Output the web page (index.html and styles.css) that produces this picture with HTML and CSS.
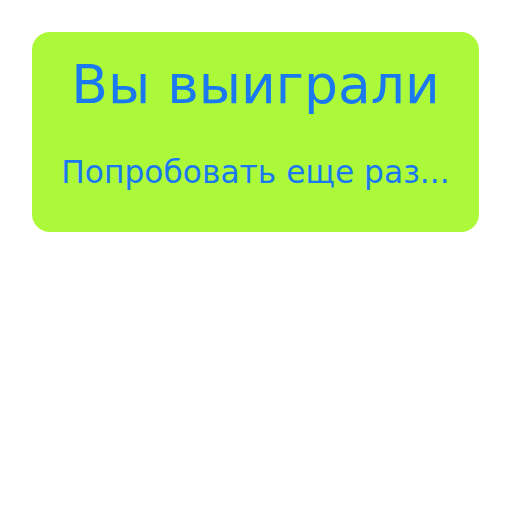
FILE: index.html
```html
<!DOCTYPE html>
<html lang="ru">
<head>
<meta charset="utf-8">
<link rel="stylesheet" href="styles.css">
</head>
<body>
<div class="card">
  <h1 class="title">Вы выиграли</h1>
  <p class="retry">Попробовать еще раз...</p>
</div>
</body>
</html>
```

FILE: styles.css
```css
html, body {
  margin: 0;
  padding: 0;
  background: #ffffff;
}
body {
  padding: 32px 33px 0 32px;
  font-family: "DejaVu Sans", sans-serif;
}
.card {
  background: #acf93a;
  border-radius: 18px;
  height: 200px;
  box-sizing: border-box;
  display: flex;
  flex-direction: column;
  align-items: center;
  padding-top: 23px;
  color: #1a79f0;
}
.title {
  margin: 0;
  font-weight: normal;
  font-size: 53.5px;
  line-height: 60px;
}
.retry {
  margin: 39px 0 0 0;
  font-size: 31.3px;
  line-height: 36px;
}
```
